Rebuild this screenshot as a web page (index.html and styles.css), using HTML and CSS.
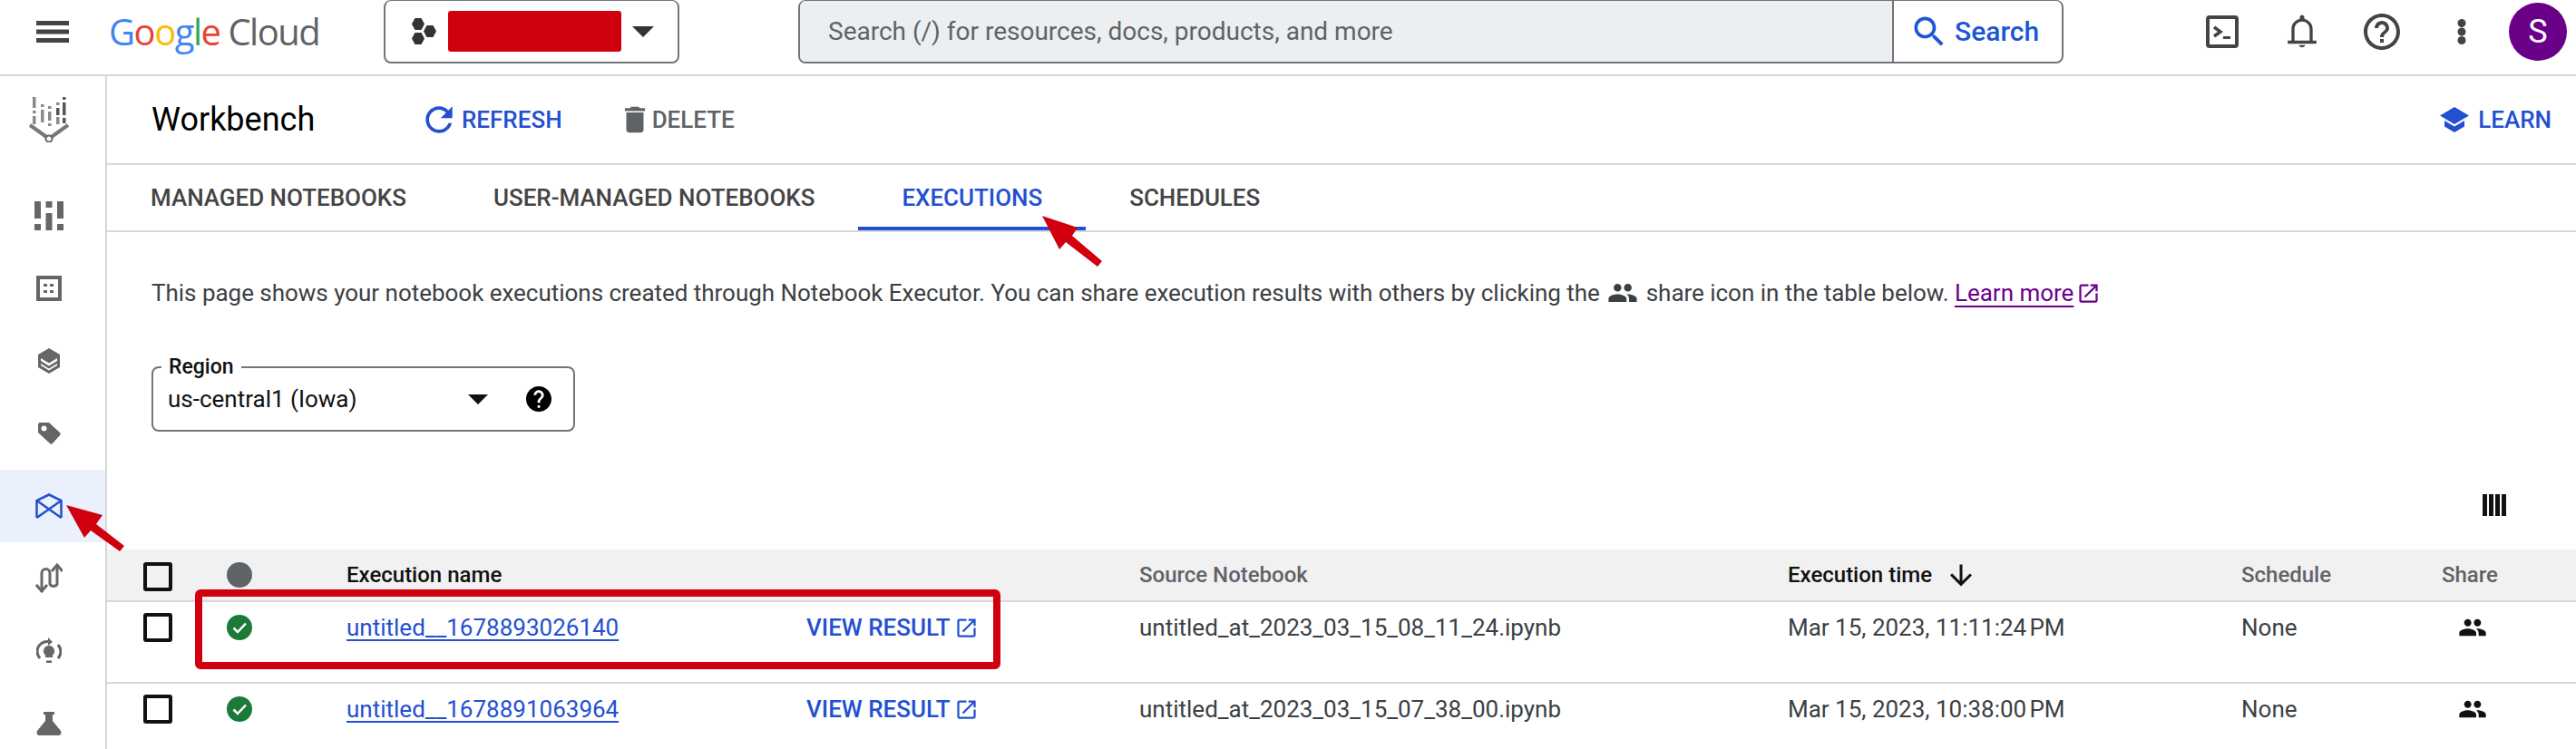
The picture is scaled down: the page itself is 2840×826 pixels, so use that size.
FILE: index.html
```html
<!DOCTYPE html>
<html lang="en">
<head>
    <meta charset="UTF-8">
    <title>Workbench</title>
    <link rel="stylesheet" href="styles.css">
</head>
<body>
    <header class="topbar">
        <svg class="menu-icon" viewBox="0 0 36 24"><path d="M0 0h36v5H0zM0 9.500h36v5H0zM0 19h36v5H0z"/></svg>
        <div class="logo"><span class="g-blue">G</span><span class="g-red">o</span><span class="g-yellow">o</span><span class="g-blue">g</span><span class="g-green">l</span><span class="g-red">e</span> <span class="logo-cloud">Cloud</span></div>
        <div class="picker">
            <svg class="picker-hex" viewBox="0 0 28 29"><path d="M4.500 0h7l3.500 6.500-3.500 6.500h-7L1 6.500zM17.500 8h7l3.500 6.500-3.500 6.500h-7L14 14.500zM4.500 16h7l3.500 6.500-3.500 6.500h-7L1 22.500z"/></svg>
            <div class="redacted"></div>
            <div class="picker-caret"></div>
        </div>
        <div class="search">
            <div class="search-input">Search (/) for resources, docs, products, and more</div>
            <div class="search-btn">
                <svg viewBox="0 0 24 24"><path d="M15.500 14h-.79l-.28-.27C15.410 12.590 16 11.110 16 9.500 16 5.910 13.090 3 9.500 3S3 5.910 3 9.500 5.910 16 9.500 16c1.610 0 3.090-.59 4.230-1.570l.27.28v.79l5 4.990L20.490 19l-4.990-5zm-6 0C7.010 14 5 11.990 5 9.500S7.010 5 9.500 5 14 7.010 14 9.500 11.990 14 9.500 14z"/></svg>
                Search
            </div>
        </div>
        <div class="top-icons">
            <svg class="ic-terminal" viewBox="0 0 36 36"><rect x="2" y="2" width="32" height="32" rx="2" fill="none" stroke="#444" stroke-width="4"/><path d="M9 13l7 5-7 5" fill="none" stroke="#444" stroke-width="3.500"/><path d="M19 23h8v3h-8z"/></svg>
            <svg class="ic-bell" viewBox="0 0 24 24"><path d="M12 23c1.100 0 2-.7 2-1.500h-4c0 .8.900 1.500 2 1.500zM19 18.500V11c0-3.500-2-6-5.500-7V3c0-.8-.7-1.500-1.500-1.500S10.500 2.200 10.500 3v1C7 5 5 7.500 5 11v7.500H2.500V20.500h19v-2zm-2 0H7V11c0-3 2-5.200 5-5.200s5 2.200 5 5.200z"/></svg>
            <svg class="ic-help" viewBox="2 2 20 20"><path d="M11 18h2v-2h-2v2zm1-16C6.480 2 2 6.480 2 12s4.480 10 10 10 10-4.480 10-10S17.520 2 12 2zm0 18c-4.410 0-8-3.590-8-8s3.590-8 8-8 8 3.590 8 8-3.590 8-8 8zm0-14c-2.210 0-4 1.790-4 4h2c0-1.100.9-2 2-2s2 .9 2 2c0 2-3 1.750-3 5h2c0-2.250 3-2.500 3-5 0-2.210-1.790-4-4-4z"/></svg>
            <svg class="ic-more" viewBox="0 0 10 28"><circle cx="5" cy="4.500" r="4.500"/><circle cx="5" cy="14" r="4.500"/><circle cx="5" cy="23.500" r="4.500"/></svg>
            <div class="avatar">S</div>
        </div>
    </header>

    <div class="main">
        <nav class="sidebar">
            <div class="side-logo">
                <svg viewBox="0 0 44 50">
                    <g fill="#8a8a8a"><rect x="4" y="0" width="3.500" height="12"/><rect x="4" y="15" width="3.500" height="3"/><rect x="4" y="21" width="3.500" height="9"/><rect x="13" y="8" width="3.500" height="3"/><rect x="13" y="14" width="3.500" height="14"/><rect x="21" y="10" width="3.500" height="3"/><rect x="21" y="16" width="3.500" height="10"/><rect x="21" y="29" width="3.500" height="3"/><rect x="30" y="6" width="3.500" height="3"/><rect x="30" y="22" width="3.500" height="8"/></g>
                    <g fill="#555"><rect x="37" y="0" width="3.500" height="3"/><rect x="37" y="6" width="3.500" height="14"/><rect x="37" y="23" width="3.500" height="6"/><rect x="30" y="12" width="3.500" height="8"/></g>
                    <path d="M1 31l21 15 21-15" fill="none" stroke="#777" stroke-width="4"/>
                    <circle cx="22" cy="46" r="3.500" fill="#fff" stroke="#666" stroke-width="2"/>
                </svg>
            </div>
            <div class="side-item">
                <svg class="side-dash" viewBox="0 0 32 32"><path d="M0 0h7v19H0zM0 25h7v7H0zM12.500 0h7v7h-7zM12.500 13h7v19h-7zM25 0h7v19h-7zM25 25h7v7h-7z"/></svg>
            </div>
            <div class="side-item">
                <svg class="side-grid" viewBox="0 0 28 28"><path fill-rule="evenodd" d="M0 0h28v28H0zM4 4v20h20V4zM8 9h4v3H8zM15 9h4v3h-4zM8 16h4v3H8zM15 16h4v3h-4z"/></svg>
            </div>
            <div class="side-item">
                <svg class="side-layers" viewBox="0 0 24 28"><path fill-rule="evenodd" d="M12 0l12 7v14l-12 7-12-7V7zM3 11l9 5.500 9-5.500v3l-9 5.500-9-5.500zM3 17l9 5.500 9-5.500v2l-9 5.500-9-5.500z"/></svg>
            </div>
            <div class="side-item">
                <svg class="side-tag" viewBox="0 0 26 24"><path fill-rule="evenodd" d="M3 0h10l12 11c1 1 1 2 0 3l-8 9c-1 1-2 1-3 0L1 11V3c0-2 1-3 2-3zM7.500 3.500a3 3 0 1 0 0 6 3 3 0 0 0 0-6z"/></svg>
            </div>
            <div class="side-item side-active">
                <svg class="side-wb" viewBox="0 0 30 28"><path d="M1.500 27V8L15 1.500 28.500 8v19M1.500 8L28.500 27M28.500 8L1.500 27" fill="none" stroke="#2350d0" stroke-width="2.500"/></svg>
            </div>
            <div class="side-item">
                <svg class="side-pipe" viewBox="0 0 30 34"><path d="M7 32V11a4.500 4.500 0 0 1 9 0v12a4.500 4.500 0 0 0 8 0V3" fill="none" stroke="#666" stroke-width="3"/><path d="M1 24l6 7 6-7M18 9l6-7 6 7" fill="none" stroke="#666" stroke-width="3"/></svg>
            </div>
            <div class="side-item">
                <svg class="side-bulb" viewBox="0 0 28 30"><path d="M4 23C0 18 0 12 4 8c3-3 7-4 11-3M24 8c4 5 4 10 0 15" fill="none" stroke="#666" stroke-width="3"/><path d="M13 0l5 5-5 4zM14 9a6 6 0 0 1 4 10.500V22h-8v-2.500A6 6 0 0 1 14 9zM11 25.500h6V28h-6z"/></svg>
            </div>
            <div class="side-item">
                <svg class="side-flask" viewBox="0 0 28 26"><path d="M8 0h12v3h-2v7l9 11c1 2 0 5-2 5H3c-2 0-3-3-2-5l9-11V3H8z"/></svg>
            </div>
        </nav>

        <div class="content">
            <div class="titlebar">
                <h1 class="page-title">Workbench</h1>
                <a class="action action-blue action-refresh">
                    <svg viewBox="0 0 24 24"><path d="M17.650 6.350C16.200 4.900 14.210 4 12 4c-4.420 0-7.990 3.580-7.990 8s3.570 8 7.990 8c3.730 0 6.840-2.550 7.730-6h-2.080c-.82 2.330-3.040 4-5.650 4-3.310 0-6-2.690-6-6s2.690-6 6-6c1.660 0 3.140.69 4.220 1.780L13 11h7V4l-2.350 2.350z"/></svg>
                    REFRESH
                </a>
                <a class="action action-gray">
                    <svg viewBox="0 0 24 24"><path d="M6 19c0 1.100.9 2 2 2h8c1.100 0 2-.9 2-2V7H6v12zM19 4h-3.500l-1-1h-5l-1 1H5v2h14V4z"/></svg>
                    DELETE
                </a>
                <a class="action action-blue learn">
                    <svg viewBox="0 0 32 28"><path d="M16 0l16 9.500-16 9.500L0 9.500zM5 15l11 6.500L27 15v6.500L16 28 5 21.500z"/></svg>
                    LEARN
                </a>
            </div>

            <div class="tabs">
                <div class="tab">MANAGED NOTEBOOKS</div>
                <div class="tab">USER-MANAGED NOTEBOOKS</div>
                <div class="tab tab-active">EXECUTIONS</div>
                <div class="tab">SCHEDULES</div>
            </div>

            <p class="intro">This page shows your notebook executions created through Notebook Executor. You can share execution results with others by clicking the <svg class="people intro-people" viewBox="0 0 24 24"><path d="M16 11c1.660 0 2.990-1.340 2.990-3S17.660 5 16 5c-1.660 0-3 1.340-3 3s1.340 3 3 3zm-8 0c1.660 0 2.990-1.340 2.990-3S9.660 5 8 5C6.340 5 5 6.340 5 8s1.340 3 3 3zm0 2c-2.330 0-7 1.170-7 3.500V19h14v-2.500c0-2.330-4.670-3.500-7-3.500zm8 0c-.29 0-.62.02-.97.05 1.160.84 1.970 1.970 1.970 3.450V19h6v-2.500c0-2.330-4.670-3.500-7-3.500z"/></svg> share icon in the table below. <a class="learn-more">Learn more</a> <svg class="ext ext-purple" viewBox="0 0 24 24"><path d="M19 19H5V5h7V3H5c-1.110 0-2 .9-2 2v14c0 1.100.89 2 2 2h14c1.100 0 2-.9 2-2v-7h-2v7zM14 3v2h3.590l-9.830 9.830 1.410 1.410L19 6.410V10h2V3h-7z"/></svg></p>

            <div class="region">
                <span class="region-label">Region</span>
                <span class="region-value">us-central1 (Iowa)</span>
                <div class="region-caret"></div>
                <svg class="region-help" viewBox="2 2 20 20"><path d="M12 2C6.480 2 2 6.480 2 12s4.480 10 10 10 10-4.480 10-10S17.520 2 12 2zm1 17h-2v-2h2v2zm2.070-7.750l-.9.920C13.450 12.900 13 13.500 13 15h-2v-.5c0-1.100.45-2.100 1.170-2.830l1.240-1.260c.37-.36.59-.86.59-1.410 0-1.100-.9-2-2-2s-2 .9-2 2H8c0-2.210 1.790-4 4-4s4 1.790 4 4c0 .88-.36 1.680-.93 2.250z"/></svg>
            </div>

            <div class="toolbar">
                <svg class="columns-icon" viewBox="0 0 26 24"><path d="M0 0h5v24H0zM7 0h5v24H7zM14 0h5v24h-5zM21 0h5v24h-5z"/></svg>
            </div>

            <div class="table">
                <div class="row row-head">
                    <div class="cb"></div>
                    <div class="dot-gray"></div>
                    <div class="th-dark">Execution name</div>
                    <div></div>
                    <div>Source Notebook</div>
                    <div class="th-dark th-sort">Execution time
                        <svg viewBox="4 4 16 16"><path d="M20 12l-1.410-1.410L13 16.170V4h-2v12.170l-5.580-5.590L4 12l8 8 8-8z"/></svg>
                    </div>
                    <div>Schedule</div>
                    <div>Share</div>
                </div>
                <div class="row">
                    <div class="cb"></div>
                    <svg class="ok" viewBox="0 0 28 28"><circle cx="14" cy="14" r="14" fill="#1c7a38"/><path d="M7.500 14.500l4.500 4.500 9-9.500" fill="none" stroke="#fff" stroke-width="2.500"/></svg>
                    <a class="run-link">untitled__1678893026140</a>
                    <a class="view-result">VIEW RESULT
                        <svg class="ext" viewBox="0 0 24 24"><path d="M19 19H5V5h7V3H5c-1.110 0-2 .9-2 2v14c0 1.100.89 2 2 2h14c1.100 0 2-.9 2-2v-7h-2v7zM14 3v2h3.590l-9.830 9.830 1.410 1.410L19 6.410V10h2V3h-7z"/></svg>
                    </a>
                    <div>untitled_at_2023_03_15_08_11_24.ipynb</div>
                    <div>Mar 15, 2023, 11:11:24&#8239;PM</div>
                    <div>None</div>
                    <svg class="people share-icon" viewBox="0 0 24 24"><path d="M16 11c1.660 0 2.990-1.340 2.990-3S17.660 5 16 5c-1.660 0-3 1.340-3 3s1.340 3 3 3zm-8 0c1.660 0 2.990-1.340 2.990-3S9.660 5 8 5C6.340 5 5 6.340 5 8s1.340 3 3 3zm0 2c-2.330 0-7 1.170-7 3.500V19h14v-2.500c0-2.330-4.670-3.500-7-3.500zm8 0c-.29 0-.62.02-.97.05 1.160.84 1.970 1.970 1.970 3.450V19h6v-2.500c0-2.330-4.670-3.500-7-3.500z"/></svg>
                </div>
                <div class="row">
                    <div class="cb"></div>
                    <svg class="ok" viewBox="0 0 28 28"><circle cx="14" cy="14" r="14" fill="#1c7a38"/><path d="M7.500 14.500l4.500 4.500 9-9.500" fill="none" stroke="#fff" stroke-width="2.500"/></svg>
                    <a class="run-link">untitled__1678891063964</a>
                    <a class="view-result">VIEW RESULT
                        <svg class="ext" viewBox="0 0 24 24"><path d="M19 19H5V5h7V3H5c-1.110 0-2 .9-2 2v14c0 1.100.89 2 2 2h14c1.100 0 2-.9 2-2v-7h-2v7zM14 3v2h3.590l-9.830 9.830 1.410 1.410L19 6.410V10h2V3h-7z"/></svg>
                    </a>
                    <div>untitled_at_2023_03_15_07_38_00.ipynb</div>
                    <div>Mar 15, 2023, 10:38:00&#8239;PM</div>
                    <div>None</div>
                    <svg class="people share-icon" viewBox="0 0 24 24"><path d="M16 11c1.660 0 2.990-1.340 2.990-3S17.660 5 16 5c-1.660 0-3 1.340-3 3s1.340 3 3 3zm-8 0c1.660 0 2.990-1.340 2.990-3S9.660 5 8 5C6.340 5 5 6.340 5 8s1.340 3 3 3zm0 2c-2.330 0-7 1.170-7 3.500V19h14v-2.500c0-2.330-4.670-3.500-7-3.500zm8 0c-.29 0-.62.02-.97.05 1.160.84 1.970 1.970 1.970 3.450V19h6v-2.500c0-2.330-4.670-3.500-7-3.500z"/></svg>
                </div>
            </div>
        </div>
    </div>

    <!-- red annotations drawn over the screenshot -->
    <svg class="annotations" viewBox="0 0 2840 826">
        <rect x="219" y="654" width="880" height="80" rx="2" fill="none" stroke="#d0000f" stroke-width="8"/>
        <path fill="#d0000f" d="M73 557L113 568 106 578 137 602 132 608 100 585 93 593z"/>
        <path fill="#d0000f" d="M1149 238L1188 251 1182 260 1215 288 1210 294 1175 267 1168 275z"/>
    </svg>
</body>
</html>
```

FILE: styles.css
```css
* {
    box-sizing: border-box;
}
html, body {
    margin: 0;
    height: 826px;
    overflow: hidden;
}
body {
    position: relative;
    font-family: Roboto, "Liberation Sans", sans-serif;
    font-size: 26px;
    color: #444;
    background: #fff;
}
svg {
    display: block;
    flex: none;
    fill: currentColor;
}

/* top bar */
.topbar {
    display: flex;
    align-items: flex-start;
    height: 84px;
    border-bottom: 2px solid #d3d8dc;
}
.menu-icon {
    width: 36px;
    height: 24px;
    margin: 23px 44px 0 40px;
    color: #444;
}
.logo {
    width: 303px;
    height: 70px;
    font-family: "Open Sans", sans-serif;
    font-size: 40px;
    line-height: 70px;
    letter-spacing: -1.500px;
    white-space: nowrap;
}
.g-blue { color: #4285f4; }
.g-red { color: #ea4335; }
.g-yellow { color: #fbbc05; }
.g-green { color: #34a853; }
.logo-cloud { color: #5f6368; }
.picker {
    display: flex;
    align-items: center;
    width: 326px;
    height: 70px;
    border: 2px solid #70757a;
    border-top-width: 1px;
    border-radius: 8px;
    padding-left: 28px;
}
.picker-hex {
    width: 28px;
    height: 29px;
    color: #333;
}
.redacted {
    width: 191px;
    height: 45px;
    margin-left: 13px;
    border-radius: 3px;
    background: #d0000f;
}
.picker-caret {
    margin-left: 12px;
    border-top: 12px solid #333;
    border-left: 12px solid transparent;
    border-right: 12px solid transparent;
}
.search {
    display: flex;
    width: 1395px;
    height: 70px;
    margin-left: 131px;
    border: 2px solid #70757a;
    border-top-width: 1px;
    border-radius: 8px;
    overflow: hidden;
}
.search-input {
    flex: 1;
    padding-left: 31px;
    background: #eceff1;
    color: #5f6368;
    font-size: 28px;
    line-height: 68px;
}
.search-btn {
    display: flex;
    align-items: center;
    width: 187px;
    padding-left: 17px;
    gap: 6px;
    border-left: 2px solid #70757a;
    color: #1a56d6;
    font-size: 30px;
    font-weight: 500;
}
.search-btn svg {
    width: 44px;
    height: 44px;
}
.top-icons {
    flex: 1;
    height: 70px;
    color: #444;
    display: flex;
    align-items: flex-start;
}
.ic-terminal {
    width: 36px;
    height: 36px;
    margin: 17px 0 0 157px;
}
.ic-bell {
    width: 40px;
    height: 40px;
    margin: 14px 0 0 50px;
}
.ic-help {
    width: 40px;
    height: 40px;
    margin: 15px 0 0 48px;
}
.ic-more {
    width: 10px;
    height: 28px;
    margin: 21px 0 0 63px;
}
.avatar {
    width: 64px;
    height: 64px;
    margin: 3px 0 0 47px;
    border-radius: 50%;
    background: #6a0088;
    color: #fff;
    font-size: 36px;
    line-height: 64px;
    text-align: center;
}

/* sidebar */
.main {
    display: flex;
    height: 742px;
}
.sidebar {
    width: 118px;
    flex: none;
    border-right: 2px solid #d8d8d8;
    color: #666;
}
.side-logo {
    height: 114px;
    padding: 23px 0 0 32px;
}
.side-logo svg {
    width: 44px;
    height: 50px;
}
.side-item {
    display: flex;
    align-items: center;
    justify-content: center;
    height: 80px;
    padding-right: 8px;
}
.side-active {
    background: #ebf0fd;
}
.side-dash { width: 32px; height: 32px; }
.side-grid { width: 28px; height: 28px; }
.side-layers { width: 24px; height: 28px; }
.side-tag { width: 26px; height: 24px; }
.side-wb { width: 30px; height: 28px; }
.side-pipe { width: 30px; height: 34px; }
.side-bulb { width: 28px; height: 30px; }
.side-flask { width: 28px; height: 26px; }

/* title bar */
.content {
    flex: 1;
    min-width: 0;
}
.titlebar {
    display: flex;
    align-items: center;
    height: 98px;
    padding: 0 27px 0 49px;
    border-bottom: 2px solid #d8d8d8;
}
.page-title {
    width: 295px;
    margin: 0;
    color: #000;
    font-size: 36px;
    font-weight: 400;
}
.action {
    display: flex;
    align-items: center;
    font-size: 26px;
    font-weight: 500;
}
.action-blue {
    color: #2350d0;
}
.action-refresh {
    gap: 3px;
}
.action-refresh svg {
    width: 44px;
    height: 44px;
}
.action-gray {
    gap: 0;
    margin-left: 61px;
    color: #5f6368;
}
.action-gray svg {
    width: 38px;
    height: 38px;
}
.learn {
    margin-left: auto;
    gap: 10px;
}
.learn svg {
    width: 32px;
    height: 28px;
}

/* tabs */
.tabs {
    display: flex;
    height: 74px;
    border-bottom: 2px solid #d8d8d8;
}
.tab {
    padding: 0 48px;
    color: #444;
    font-weight: 500;
    letter-spacing: -.03px;
    line-height: 72px;
}
.tab-active {
    height: 72px;
    border-bottom: 4px solid #2350d0;
    color: #2350d0;
}

/* intro */
.intro {
    margin: 48px 0 0 49px;
    color: #3c4043;
    font-size: 26px;
    letter-spacing: -.025px;
    line-height: 38px;
    white-space: nowrap;
}
.intro svg {
    display: inline-block;
    vertical-align: middle;
}
.intro-people {
    width: 34px;
    height: 34px;
    margin: -4px 2px 0;
    color: #3c4043;
}
.learn-more {
    color: #6a0090;
    text-decoration: underline;
    text-decoration-thickness: 2px;
    text-underline-offset: 5px;
}
.ext {
    width: 27px;
    height: 27px;
}
.intro .ext-purple {
    margin: -4px 0 0 -4px;
    color: #6a0090;
}

/* region select */
.region {
    position: relative;
    display: flex;
    align-items: center;
    width: 467px;
    height: 72px;
    margin: 62px 0 0 49px;
    padding-left: 16px;
    border: 2px solid #70757a;
    border-radius: 8px;
    color: #111;
}
.region-label {
    position: absolute;
    top: -14px;
    left: 9px;
    padding: 0 8px;
    background: #fff;
    font-size: 23px;
    font-weight: 500;
    line-height: 26px;
}
.region-value {
    width: 331px;
    font-size: 26px;
}
.region-caret {
    border-top: 11px solid #111;
    border-left: 11px solid transparent;
    border-right: 11px solid transparent;
}
.region-help {
    width: 28px;
    height: 28px;
    margin-left: 42px;
    color: #000;
}

/* table */
.toolbar {
    display: flex;
    justify-content: flex-end;
    height: 130px;
    padding: 69px 77px 0 0;
    color: #111;
}
.columns-icon {
    width: 26px;
    height: 24px;
}
.row {
    display: grid;
    grid-template-columns: 132px 132px 507px 367px 715px 500px 221px 1fr;
    align-items: start;
    height: 90px;
    padding-top: 12px;
    border-bottom: 2px solid #d8d8d8;
    color: #3c4043;
    font-size: 26px;
    line-height: 32px;
}
.row-head {
    height: 58px;
    padding-top: 14px;
    background: #f1f1f1;
    color: #5f6368;
    font-size: 24px;
    font-weight: 500;
    line-height: 28px;
}
.th-dark {
    color: #111;
}
.th-sort {
    display: flex;
    align-items: center;
    gap: 20px;
}
.th-sort svg {
    width: 24px;
    height: 27px;
}
.cb {
    width: 32px;
    height: 32px;
    margin-left: 40px;
    border: 4px solid #111;
    border-radius: 3px;
}
.dot-gray {
    width: 28px;
    height: 28px;
    border-radius: 50%;
    background: #5f6368;
}
.ok {
    width: 28px;
    height: 28px;
    margin-top: 2px;
}
.run-link {
    width: max-content;
    color: #2350d0;
    text-decoration: underline;
    text-decoration-thickness: 2px;
    text-underline-offset: 4px;
}
.view-result {
    display: flex;
    align-items: center;
    gap: 4px;
    color: #2350d0;
    font-weight: 500;
}
.share-icon {
    width: 32px;
    height: 32px;
    margin: 0 0 0 18px;
    color: #111;
}

/* annotations sit on top of everything */
.annotations {
    position: absolute;
    top: 0;
    left: 0;
    width: 2840px;
    height: 826px;
    pointer-events: none;
}
```
